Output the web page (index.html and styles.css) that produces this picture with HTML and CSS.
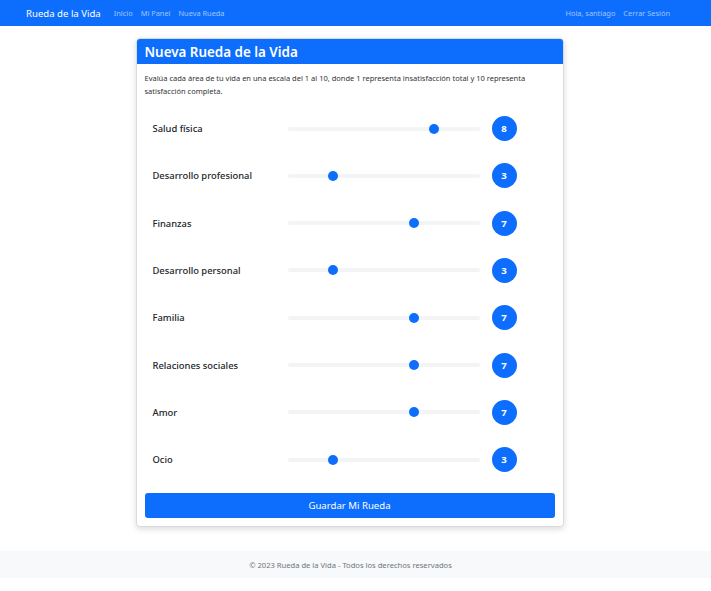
FILE: index.html
```html
<!DOCTYPE html>
<html lang="es">
<head>
<meta charset="utf-8">
<title>Nueva Rueda de la Vida</title>
<link rel="stylesheet" href="styles.css">
</head>
<body>
<nav class="navbar">
  <div class="nav-left">
    <span class="brand">Rueda de la Vida</span>
    <a class="nav-link">Inicio</a>
    <a class="nav-link">Mi Panel</a>
    <a class="nav-link">Nueva Rueda</a>
  </div>
  <div class="nav-right">
    <a class="nav-link">Hola, santiago</a>
    <a class="nav-link">Cerrar Sesión</a>
  </div>
</nav>
<main class="main">
  <section class="card">
    <header class="card-header"><h1 class="card-title">Nueva Rueda de la Vida</h1></header>
    <div class="card-body">
      <p class="intro">Evalúa cada área de tu vida en una escala del 1 al 10, donde 1 representa insatisfacción total y 10 representa satisfacción completa.</p>
      <div class="rows">
        <div class="row"><label class="label">Salud física</label><input class="range" type="range" min="1" max="10" value="8"><span class="badge">8</span></div>
        <div class="row"><label class="label">Desarrollo profesional</label><input class="range" type="range" min="1" max="10" value="3"><span class="badge">3</span></div>
        <div class="row"><label class="label">Finanzas</label><input class="range" type="range" min="1" max="10" value="7"><span class="badge">7</span></div>
        <div class="row"><label class="label">Desarrollo personal</label><input class="range" type="range" min="1" max="10" value="3"><span class="badge">3</span></div>
        <div class="row"><label class="label">Familia</label><input class="range" type="range" min="1" max="10" value="7"><span class="badge">7</span></div>
        <div class="row"><label class="label">Relaciones sociales</label><input class="range" type="range" min="1" max="10" value="7"><span class="badge">7</span></div>
        <div class="row"><label class="label">Amor</label><input class="range" type="range" min="1" max="10" value="7"><span class="badge">7</span></div>
        <div class="row"><label class="label">Ocio</label><input class="range" type="range" min="1" max="10" value="3"><span class="badge">3</span></div>
      </div>
      <button class="btn" type="button">Guardar Mi Rueda</button>
    </div>
  </section>
</main>
<footer class="footer">© 2023 Rueda de la Vida - Todos los derechos reservados</footer>
</body>
</html>
```
FILE: styles.css
```css
* { box-sizing: border-box; }
html, body { margin: 0; padding: 0; background: #fff; }
body {
  font-family: "Noto Sans", "Open Sans", sans-serif;
  color: #212529;
}
.navbar {
  height: 26px;
  background: #0d6efd;
  display: flex;
  align-items: center;
  justify-content: space-between;
  padding: 0 41px 0 26px;
}
.nav-left, .nav-right { display: flex; align-items: center; gap: 8px; }
.brand { color: #fff; font-size: 9.6px; margin-right: 5px; }
.nav-link { color: rgba(255,255,255,0.6); font-size: 7.4px; text-decoration: none; }
.main { display: flex; justify-content: center; padding: 12px 12px 24px 0; }
.card {
  width: 428px;
  border: 1px solid #d9dcdf;
  border-radius: 4px;
  background: #fff;
  box-shadow: 0 2px 6px rgba(0,0,0,0.15);
  overflow: hidden;
}
.card-header {
  background: #0d6efd;
  height: 25px;
  display: flex;
  align-items: center;
  padding: 0 8px;
}
.card-title { margin: 0; color: #fff; font-size: 13.4px; font-weight: 600; }
.card-body { padding: 8px 8px 8px; }
.intro { margin: 0; font-size: 7.5px; line-height: 13px; color: #333; }
.rows { display: flex; flex-direction: column; gap: 22.33px; margin-top: 18px; padding: 0 8px; }
.row { display: flex; align-items: center; height: 25px; }
.label { width: 135px; font-size: 9.4px; font-weight: 500; }
.range {
  -webkit-appearance: none;
  appearance: none;
  width: 192px;
  height: 12px;
  margin: 0 12px 0 0;
  padding: 0;
  background: transparent;
}
.range::-webkit-slider-runnable-track {
  height: 4px;
  background: #f2f4f6;
  border-radius: 2px;
}
.range::-webkit-slider-thumb {
  -webkit-appearance: none;
  width: 10px;
  height: 10px;
  margin-top: -3px;
  border-radius: 50%;
  background: #0d6efd;
  border: none;
}
.badge {
  width: 25px;
  height: 25px;
  border-radius: 50%;
  background: #0d6efd;
  color: #fff;
  font-size: 9.6px;
  font-weight: 700;
  display: flex;
  align-items: center;
  justify-content: center;
}
.btn {
  display: block;
  width: 100%;
  margin-top: 21px;
  height: 25px;
  border: none;
  border-radius: 3px;
  background: #0d6efd;
  color: #fff;
  font-family: inherit;
  font-size: 9.6px;
}
.footer {
  height: 27px;
  padding-right: 10px;
  background: #f8f9fa;
  color: #6c757d;
  font-size: 7.6px;
  display: flex;
  align-items: center;
  justify-content: center;
}
```
